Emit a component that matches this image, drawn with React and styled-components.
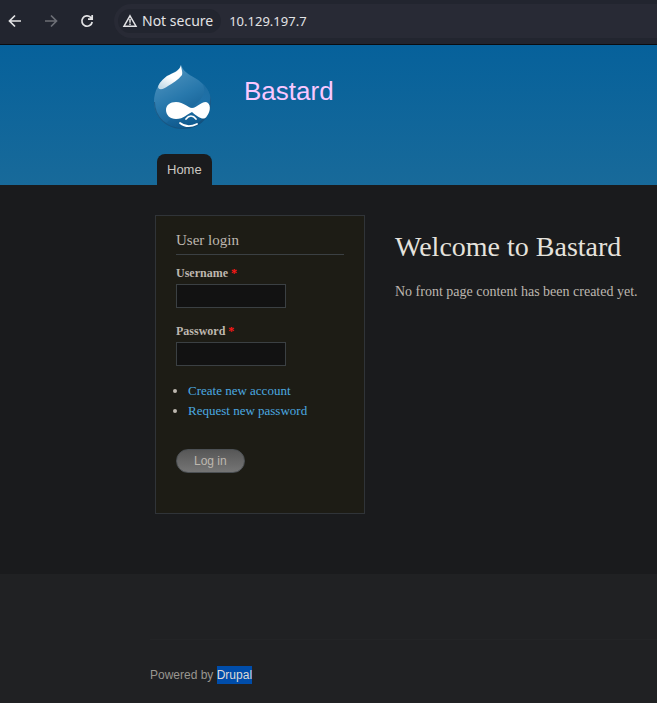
import React from "react";
import styled, { createGlobalStyle } from "styled-components";

const sans = '"Liberation Sans", Arial, sans-serif';
const serif = '"Liberation Serif", "Times New Roman", serif';

const GlobalStyle = createGlobalStyle`
  * { box-sizing: border-box; }
  html { background: #202123; }
  body { margin: 0; font-family: ${serif}; color: #bdb7af; overflow-x: hidden; }
  h1, h2, p, ul { margin: 0; padding: 0; font-weight: 400; }
`;

const Page = styled.div`
  display: flex;
  flex-direction: column;
  min-height: 100vh;
`;

const Toolbar = styled.div`
  display: flex;
  align-items: center;
  height: 45px;
  padding: 0 0 3px 6px;
  background: #22252f;
  border-bottom: 1px solid #0b0c0f;
`;

const NavButton = styled.button`
  display: flex;
  width: 18px;
  height: 18px;
  margin-right: 18px;
  padding: 0;
  border: 0;
  background: none;
  color: ${(p) => (p.disabled ? "#6d6f76" : "#e3e3e5")};
`;

const AddressBar = styled.div`
  display: flex;
  flex: 1;
  align-items: center;
  min-width: 0;
  height: 34px;
  padding-left: 4px;
  border-radius: 17px 0 0 17px;
  background: #282a35;
`;

const SecurityChip = styled.button`
  display: flex;
  align-items: center;
  gap: 4px;
  height: 24px;
  padding: 0 8px 0 4px;
  border: 0;
  border-radius: 12px;
  background: #22252f;
  color: #e3e3e5;
  font: 14px/24px "Noto Sans", sans-serif;
  white-space: nowrap;
`;

const AddressInput = styled.input`
  flex: 1;
  min-width: 0;
  margin-left: 8px;
  padding: 0;
  border: 0;
  outline: 0;
  background: none;
  color: #e3e3e5;
  font: 13px/24px "Noto Sans", sans-serif;
`;

const Header = styled.header`
  display: flex;
  flex-direction: column;
  justify-content: space-between;
  height: 140px;
  padding: 20px 20px 0 153px;
  background: linear-gradient(#06619b, #186a9a);
`;

const Brand = styled.div`
  display: flex;
  align-items: flex-start;
  gap: 31px;
`;

const SiteName = styled.a`
  margin-top: 11px;
  color: #f9c8ff;
  font: 26px/30px ${sans};
  text-decoration: none;
`;

const Tabs = styled.nav`
  display: flex;
  padding-left: 4px;
`;

const Tab = styled.a`
  padding: 0 10px;
  border-radius: 8px 8px 0 0;
  background: #1a1b1d;
  color: #ccc8c2;
  font: 13px/31px ${sans};
  text-decoration: none;
`;

const Main = styled.main`
  display: flex;
  align-items: flex-start;
  gap: 30px;
  padding: 30px 0 60px 155px;
  background: #1a1b1d;
`;

const LoginBlock = styled.section`
  flex: 0 0 210px;
  padding: 15px 20px 40px;
  border: 1px solid #303438;
  background: #1d1c15;
`;

const BlockTitle = styled.h2`
  padding-bottom: 4px;
  margin-bottom: 10px;
  border-bottom: 1px solid #3b4043;
  font-size: 15px;
  line-height: 19px;
`;

const Field = styled.div`
  display: flex;
  flex-direction: column;
  align-items: flex-start;
  gap: 2px;
  margin-bottom: 15px;
`;

const Label = styled.label`
  font-size: 12px;
  font-weight: 700;
  line-height: 17px;
`;

const Required = styled.span`
  color: #ff1717;
`;

const TextInput = styled.input`
  width: 110px;
  height: 24px;
  padding: 2px 4px;
  border: 1px solid #3b4043;
  border-radius: 0;
  outline: 0;
  background: #121212;
  color: #bdb7af;
`;

const Links = styled.ul`
  padding-left: 12px;
  margin-bottom: 28px;
  font-size: 13px;
  line-height: 20px;
`;

const Link = styled.a`
  color: #4ba9e0;
  text-decoration: none;
`;

const Submit = styled.button`
  display: block;
  height: 24px;
  padding: 0 17px;
  border: 1px solid #4c5054;
  border-radius: 12px;
  background: linear-gradient(#575757, #757575);
  color: #bdb7af;
  font: 12px/22px ${sans};
`;

const Content = styled.section`
  flex: 1;
  min-width: 0;
  padding-top: 15px;
`;

const Title = styled.h1`
  margin-bottom: 17px;
  color: #e5e2dc;
  font-size: 28px;
  line-height: 34px;
  white-space: nowrap;
`;

const Text = styled.p`
  font-size: 14px;
  line-height: 21px;
`;

const Footer = styled.footer`
  flex: 1;
  padding: 65px 0 18px 150px;
  background: #202123;
`;

const Credit = styled.p`
  padding-top: 26px;
  border-top: 1px solid #232426;
  color: #999690;
  font: 12px/18px ${sans};
`;

const SelectedLink = styled.a`
  display: inline-block;
  background: #004daa;
  color: #dedbd6;
  text-decoration: none;
`;

const NavIcon = ({ d }) => (
  <svg width="18" height="18" viewBox="0 0 18 18" fill="none" stroke="currentColor" strokeWidth="1.7" aria-hidden="true">
    <path d={d} />
  </svg>
);

const WarningIcon = () => (
  <svg width="16" height="16" viewBox="0 0 16 16" fill="none" stroke="currentColor" strokeWidth="1.5" aria-hidden="true">
    <path d="M8 2.8 14 13.2H2Z" />
    <path d="M8 6v3.7M8 10.4v1.5" />
  </svg>
);

const DropLogo = () => (
  <svg width="60" height="66" viewBox="0 0 60 66" role="img" aria-label="Home">
    <defs>
      <linearGradient id="drop" x1="0.2" y1="0.1" x2="0.65" y2="1">
        <stop offset="0" stopColor="#4c91bd" />
        <stop offset="0.45" stopColor="#2878ac" />
        <stop offset="1" stopColor="#0b558a" />
      </linearGradient>
      <linearGradient id="shade" x1="0.5" y1="0" x2="0.5" y2="1">
        <stop offset="0" stopColor="#0c5689" stopOpacity="0.7" />
        <stop offset="0.6" stopColor="#2378b0" stopOpacity="0.6" />
        <stop offset="1" stopColor="#0d568a" stopOpacity="0.5" />
      </linearGradient>
      <linearGradient id="gloss" x1="0.8" y1="0" x2="0.25" y2="1">
        <stop offset="0.5" stopColor="#ffffff" />
        <stop offset="1" stopColor="#c3dae8" />
      </linearGradient>
      <clipPath id="dropClip">
        <path d="M28 0C30 6 35 9 42 13C52 19 58 27 58 37C58 53 46 64 30 64C14 64 1 53 1 37C1 26 6 17 14 11C21 7 26 6 28 0Z" />
      </clipPath>
    </defs>
    <g clipPath="url(#dropClip)">
      <path fill="url(#drop)" d="M0 0H60V66H0Z" />
      <path fill="url(#shade)" d="M28 0C38 8 53 15 51 27C48 42 28 45 13 58C30 69 60 60 60 36V0Z" />
      <path fill="none" stroke="#164d75" strokeOpacity="0.6" strokeWidth="2" d="M58 28C60 50 46 64 30 64C14 64 1 53 1 37" />
    </g>
    <path fill="url(#gloss)" d="M28 0C27 6 20 8 14 11C10 14 6 18 5 22C6 26 11 24 15 21C20 18 25 15 29 10C30 7 28 3 28 0Z" />
    <path fill="#fff" d="M23 37C31 37 35 43 39 43C44 43 47 37 53 37C58 38 58 46 54 51C51 56 46 53 39 47C34 49 31 54 23 54C17 54 13 50 13 45C13 40 17 37 23 37Z" />
    <path fill="none" stroke="#fff" strokeWidth="1.7" strokeLinecap="round" d="M33 54C36 50 40 50 43 54" />
    <path fill="none" stroke="#fff" strokeWidth="1.8" strokeLinecap="round" d="M27 58C32 62 38 62 44 59" />
  </svg>
);

export default function App() {
  return (
    <Page>
      <GlobalStyle />
      <Toolbar>
        <NavButton aria-label="Back"><NavIcon d="M15 9H4M9 3.5 3.5 9 9 14.5" /></NavButton>
        <NavButton aria-label="Forward" disabled><NavIcon d="M3 9H14M9 3.5 14.5 9 9 14.5" /></NavButton>
        <NavButton aria-label="Reload"><NavIcon d="M14.2 10A5.2 5.2 0 1 1 12.7 5.3L14.5 7M14.2 3V7.2H10" /></NavButton>
        <AddressBar>
          <SecurityChip><WarningIcon />Not secure</SecurityChip>
          <AddressInput aria-label="Address" defaultValue="10.129.197.7" />
        </AddressBar>
      </Toolbar>
      <Header>
        <Brand>
          <DropLogo />
          <SiteName href="#">Bastard</SiteName>
        </Brand>
        <Tabs><Tab href="#">Home</Tab></Tabs>
      </Header>
      <Main>
        <LoginBlock>
          <BlockTitle>User login</BlockTitle>
          <form onSubmit={(e) => e.preventDefault()}>
            <Field>
              <Label htmlFor="name">Username <Required>*</Required></Label>
              <TextInput id="name" type="text" />
            </Field>
            <Field>
              <Label htmlFor="pass">Password <Required>*</Required></Label>
              <TextInput id="pass" type="password" />
            </Field>
            <Links>
              <li><Link href="#">Create new account</Link></li>
              <li><Link href="#">Request new password</Link></li>
            </Links>
            <Submit type="submit">Log in</Submit>
          </form>
        </LoginBlock>
        <Content>
          <Title>Welcome to Bastard</Title>
          <Text>No front page content has been created yet.</Text>
        </Content>
      </Main>
      <Footer>
        <Credit>Powered by <SelectedLink href="#">Drupal</SelectedLink></Credit>
      </Footer>
    </Page>
  );
}
